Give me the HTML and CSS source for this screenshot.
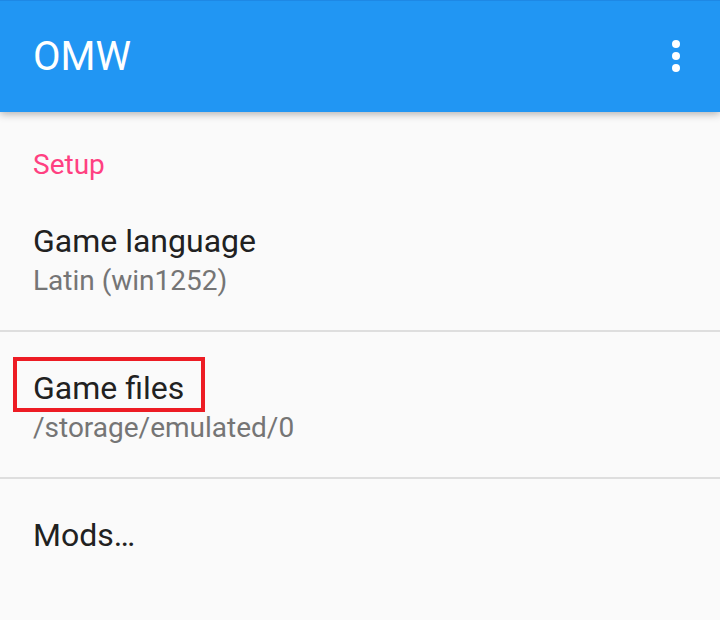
FILE: index.html
```html
<html>
<head>
	<title>OMW</title>
	<link rel="stylesheet" href="styles.css">
</head>
<body>
	<div class="appbar">
		<span class="apptitle">OMW</span>
		<svg class="overflow" width="8" height="32" viewBox="0 0 8 32">
			<circle cx="4" cy="4" r="4" fill="#fff" />
			<circle cx="4" cy="16" r="4" fill="#fff" />
			<circle cx="4" cy="28" r="4" fill="#fff" />
		</svg>
	</div>
	<div class="prefs">
		<div class="category">Setup</div>
		<div class="pref">
			<div class="preftitle">Game language</div>
			<div class="prefsummary">Latin (win1252)</div>
		</div>
		<div class="pref">
			<div class="preftitle"><span class="marked">Game files</span></div>
			<div class="prefsummary">/storage/emulated/0</div>
		</div>
		<div class="pref">
			<div class="preftitle">Mods…</div>
		</div>
	</div>
</body>
</html>
```

FILE: styles.css
```css
body {
	margin: 0;
	background-color: #fafafa;
	font-family: Roboto, "Noto Sans", sans-serif;
	overflow: hidden;
}

.appbar {
	height: 112px;
	background-color: #2196f3;
	border-top: 1px solid #1e88e5;
	box-sizing: border-box;
	display: flex;
	align-items: center;
	padding: 0 40px 0 33px;
	box-shadow: 0 2px 8px rgba(0, 0, 0, 0.3);
	position: relative;
}

.apptitle {
	flex: 1;
	color: #fff;
	font-size: 40px;
	margin-top: 0;
}

.overflow {
	display: block;
	margin-top: -2px;
}

.category {
	color: #ff4081;
	font-size: 28px;
	line-height: 40px;
	padding: 33px 33px 0;
}

.pref {
	padding: 36px 33px 29px;
}

.pref:not(:last-child) {
	border-bottom: 2px solid #dedede;
}

.preftitle {
	color: #212121;
	font-size: 32px;
	line-height: 40px;
}

.prefsummary {
	color: #757575;
	font-size: 28px;
	line-height: 40px;
}

.marked {
	display: inline-block;
	margin: -11px 0 -4px -20px;
	padding: 7px 17px 0 16px;
	border: 4px solid #ed1c24;
	line-height: 40px;
}
```
